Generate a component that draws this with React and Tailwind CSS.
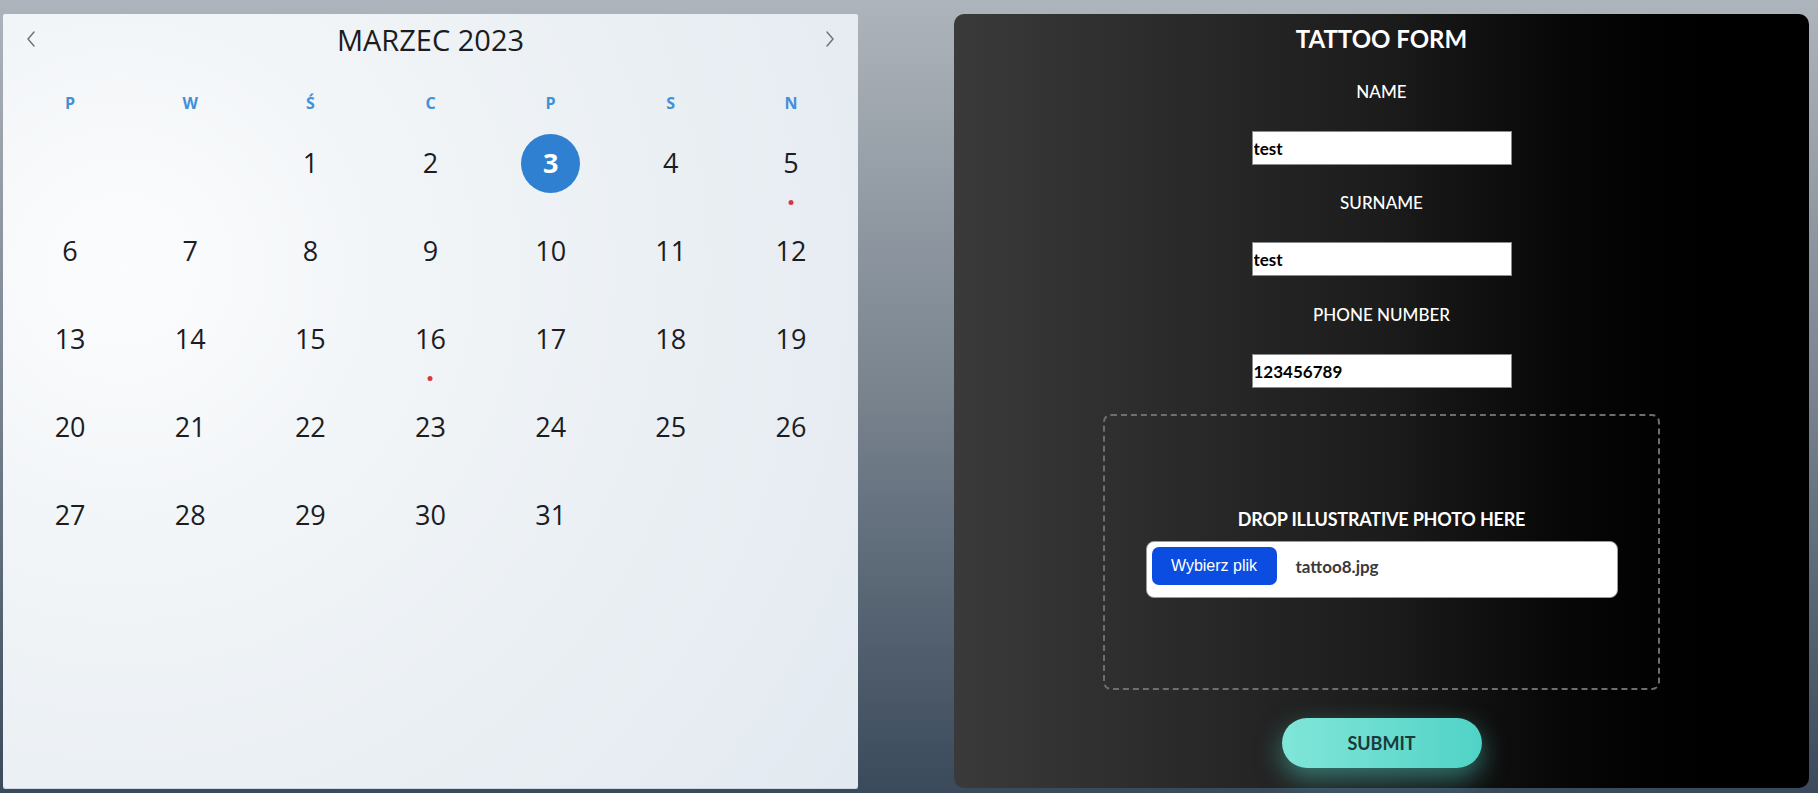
import React from "react";

const WEEKDAYS = ["P", "W", "Ś", "C", "P", "S", "N"];
const DOTTED = [5, 16];
const SELECTED = 3;

function Chevron({ dir }) {
  return (
    <svg width="12" height="18" viewBox="0 0 12 18" fill="none">
      <path
        d={dir === "left" ? "M9 2L3 9l6 7" : "M3 2l6 7-6 7"}
        stroke="#6b7078"
        strokeWidth="1.4"
        strokeLinecap="round"
        strokeLinejoin="round"
      />
    </svg>
  );
}

function Calendar() {
  const days = [null, null];
  for (let d = 1; d <= 31; d++) days.push(d);

  return (
    <div
      className="h-[774px] w-[855px] shrink-0 rounded-[2px] bg-[radial-gradient(circle_at_14%_33%,#fbfcfd_0%,#eff3f6_40%,#e2e9f0_100%)] px-[7px] shadow-[0_1px_0_#c9d6e4]"
      style={{ fontFamily: '"Open Sans", "Noto Sans", sans-serif' }}
    >
      {/* header */}
      <div className="flex h-[50px] items-center justify-between px-[15px]">
        <button className="flex h-8 w-8 items-center justify-start">
          <Chevron dir="left" />
        </button>
        <h2 className="text-[29px] font-medium leading-none text-[#1b1b22]">MARZEC 2023</h2>
        <button className="flex h-8 w-8 items-center justify-end">
          <Chevron dir="right" />
        </button>
      </div>

      {/* weekdays */}
      <div className="mt-[25px] grid h-[28px] grid-cols-7">
        {WEEKDAYS.map((w, i) => (
          <div
            key={i}
            className="flex items-center justify-center text-[16px] font-bold text-[#4190d8]"
          >
            {w}
          </div>
        ))}
      </div>

      {/* days */}
      <div className="mt-[2px] grid grid-cols-7">
        {days.map((d, i) => (
          <div key={i} className="relative flex h-[88px] items-center justify-center">
            {d === SELECTED ? (
              <span className="flex h-[59px] w-[59px] items-center justify-center rounded-full bg-[#2f80d0] text-[27px] font-bold text-white">
                {d}
              </span>
            ) : (
              <span className="text-[27px] font-medium text-[#1c1c24]">{d}</span>
            )}
            {DOTTED.includes(d) && (
              <span className="absolute bottom-[2px] left-1/2 h-[5px] w-[5px] -translate-x-1/2 rounded-full bg-[#d9363e]" />
            )}
          </div>
        ))}
      </div>
    </div>
  );
}

function Field({ label, value, mt }) {
  return (
    <>
      <label className={`${mt} text-[17px] font-medium leading-[24px] text-white`}>{label}</label>
      <input
        readOnly
        value={value}
        className="mt-[27px] h-[34px] w-[260px] border border-[#8a8a8a] bg-white px-[1px] text-[17px] font-bold text-black outline-none"
      />
    </>
  );
}

function TattooForm() {
  return (
    <div
      className="flex h-[774px] w-[855px] shrink-0 flex-col items-center rounded-[10px] bg-gradient-to-r from-[#3a3a3a] via-[#1c1c1c] to-black pt-[10px]"
      style={{ fontFamily: 'Lato, "Open Sans", sans-serif' }}
    >
      <h1 className="h-[30px] text-[24px] font-bold leading-[30px] text-white">TATTOO FORM</h1>

      <Field label="NAME" value="test" mt="mt-[26px]" />
      <Field label="SURNAME" value="test" mt="mt-[26px]" />
      <Field label="PHONE NUMBER" value="123456789" mt="mt-[27px]" />

      {/* drop zone */}
      <div className="mt-[26px] flex h-[276px] w-[557px] flex-col items-center justify-center rounded-[8px] border-2 border-dashed border-[#6e6e6e]">
        <p className="text-[18px] font-bold leading-[24px] tracking-[-0.2px] text-white">
          DROP ILLUSTRATIVE PHOTO HERE
        </p>
        <div className="mt-[10px] flex h-[57px] w-[472px] items-start rounded-[8px] border border-[#9a9a9a] bg-white p-[5px]">
          <button
            className="h-[38px] w-[125px] rounded-[7px] bg-[#0a4de0] text-[16px] text-white"
            style={{ fontFamily: '"Liberation Sans", Arial, sans-serif' }}
          >
            Wybierz plik
          </button>
          <span className="ml-[19px] mt-[7px] text-[17px] font-bold text-[#3a3a3a]">tattoo8.jpg</span>
        </div>
      </div>

      <button className="mt-[28px] h-[50px] w-[200px] rounded-full bg-gradient-to-r from-[#80e6d9] to-[#4fd3c6] text-[18px] font-bold text-[#1a3a3a] shadow-[0_10px_26px_rgba(78,211,198,0.5)]">
        SUBMIT
      </button>
    </div>
  );
}

export default function App() {
  return (
    <div className="flex min-h-screen gap-[96px] bg-gradient-to-b from-[#aeb4bb] via-[#78838e] to-[#3b4a5b] pl-[3px] pt-[14px]">
      <Calendar />
      <TattooForm />
    </div>
  );
}
